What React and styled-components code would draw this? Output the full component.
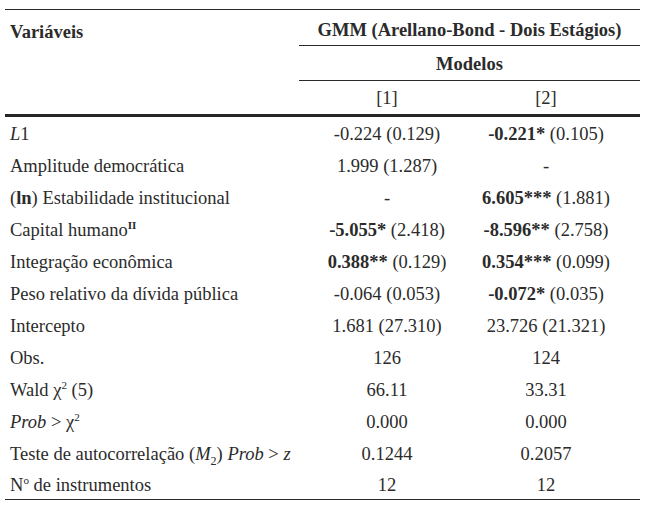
import React from "react";
import styled, { createGlobalStyle } from "styled-components";

const GlobalStyle = createGlobalStyle`
    body {
        margin: 0;
        background: #ffffff;
        font-family: "Liberation Serif", "Times New Roman", serif;
        color: #2b2b2b;
    }
`

const Page = styled.div`
    padding: 9px 10px 0 5px;
`

const Table = styled.table`
    width: 635px;
    border-collapse: collapse;
    font-size: 18.5px;
    border-top: 1px solid #2a2a2a;
    border-bottom: 1px solid #2a2a2a;
`

const HeadCell = styled.th`
    font-weight: ${(props) => props.bold ? "bold" : "normal"};
    text-align: ${(props) => props.left ? "left" : "center"};
    vertical-align: ${(props) => props.left ? "top" : "middle"};
    height: ${(props) => props.h || 34}px;
    padding: ${(props) => props.left ? "12px 0 0 5px" : `${props.pt || 0}px 0 0 0`};
    border-bottom: ${(props) => props.line ? "1px solid #2a2a2a" : "none"};
    box-sizing: border-box;
`

const HeadRow = styled.tr`
    border-bottom: ${(props) => props.thick ? "3px solid #262626" : "none"};
`

const Row = styled.tr`
    height: 32px;
`

const Label = styled.td`
    width: 289px;
    padding: 5px 0 0 5px;
    white-space: nowrap;
`

const Value = styled.td`
    text-align: center;
    width: ${(props) => props.w}px;
    padding: 5px ${(props) => props.pr || 0}px 0 0;
    white-space: nowrap;
`

const Sup = styled.sup`
    font-size: 0.6em;
    line-height: 0;
`

const Sub = styled.sub`
    font-size: 0.65em;
    line-height: 0;
`

const rows = [
    { label: <><i>L</i>1</>, a: ["", "-0.224 (0.129)"], b: ["-0.221*", " (0.105)"] },
    { label: "Amplitude democrática", a: ["", "1.999 (1.287)"], b: ["", "-"] },
    { label: <>(<b>ln</b>) Estabilidade institucional</>, a: ["", "-"], b: ["6.605***", " (1.881)"] },
    { label: <>Capital humano<Sup><b>II</b></Sup></>, a: ["-5.055*", " (2.418)"], b: ["-8.596**", " (2.758)"] },
    { label: "Integração econômica", a: ["0.388**", " (0.129)"], b: ["0.354***", " (0.099)"] },
    { label: "Peso relativo da dívida pública", a: ["", "-0.064 (0.053)"], b: ["-0.072*", " (0.035)"] },
    { label: "Intercepto", a: ["", "1.681 (27.310)"], b: ["", "23.726 (21.321)"] },
    { label: "Obs.", a: ["", "126"], b: ["", "124"] },
    { label: <>Wald χ<Sup>2</Sup> (5)</>, a: ["", "66.11"], b: ["", "33.31"] },
    { label: <><i>Prob</i> &gt; χ<Sup>2</Sup></>, a: ["", "0.000"], b: ["", "0.000"] },
    { label: <>Teste de autocorrelação (<i>M</i><Sub>2</Sub>) <i>Prob</i> &gt; <i>z</i></>, a: ["", "0.1244"], b: ["", "0.2057"] },
    { label: <>N<Sup>o</Sup> de instrumentos</>, a: ["", "12"], b: ["", "12"] },
];

const Cell = ({ v, w, pr }) => (
    <Value w={w} pr={pr}>
        {v[0] && <b>{v[0]}</b>}
        {v[1]}
    </Value>
);

const App = () => {
    return (
        <Page>
            <GlobalStyle />
            <Table>
                <thead>
                    <tr>
                        <HeadCell left bold rowSpan={3}>Variáveis</HeadCell>
                        <HeadCell bold colSpan={2} line h={36} pt={6}>GMM (Arellano-Bond - Dois Estágios)</HeadCell>
                    </tr>
                    <tr>
                        <HeadCell bold colSpan={2} line h={35} pt={2}>Modelos</HeadCell>
                    </tr>
                    <HeadRow thick>
                        <HeadCell h={35} pt={2}>[1]</HeadCell>
                        <HeadCell h={35} pt={2} style={{ paddingRight: 23 }}>[2]</HeadCell>
                    </HeadRow>
                </thead>
                <tbody>
                    {rows.map((r, i) => (
                        <Row key={i}>
                            <Label>{r.label}</Label>
                            <Cell v={r.a} w={176} />
                            <Cell v={r.b} w={142} pr={23} />
                        </Row>
                    ))}
                </tbody>
            </Table>
        </Page>
    );
};

export default App;
